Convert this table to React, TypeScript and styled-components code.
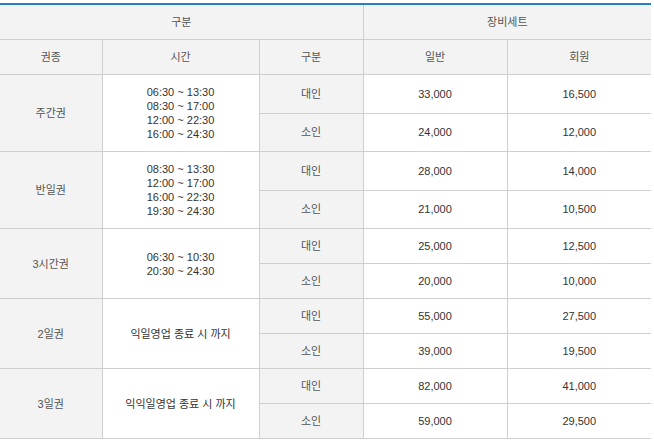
import React from "react";
import styled, { createGlobalStyle } from "styled-components";

// Types

type PriceRow = {
  who: string;
  normal: string;
  member: string;
};

type TicketGroup = {
  name: string;
  times: string[];
  rows: PriceRow[];
};

// Data

const groups: TicketGroup[] = [
  {
    name: "주간권",
    times: ["06:30 ~ 13:30", "08:30 ~ 17:00", "12:00 ~ 22:30", "16:00 ~ 24:30"],
    rows: [
      { who: "대인", normal: "33,000", member: "16,500" },
      { who: "소인", normal: "24,000", member: "12,000" },
    ],
  },
  {
    name: "반일권",
    times: ["08:30 ~ 13:30", "12:00 ~ 17:00", "16:00 ~ 22:30", "19:30 ~ 24:30"],
    rows: [
      { who: "대인", normal: "28,000", member: "14,000" },
      { who: "소인", normal: "21,000", member: "10,500" },
    ],
  },
  {
    name: "3시간권",
    times: ["06:30 ~ 10:30", "20:30 ~ 24:30"],
    rows: [
      { who: "대인", normal: "25,000", member: "12,500" },
      { who: "소인", normal: "20,000", member: "10,000" },
    ],
  },
  {
    name: "2일권",
    times: ["익일영업 종료 시 까지"],
    rows: [
      { who: "대인", normal: "55,000", member: "27,500" },
      { who: "소인", normal: "39,000", member: "19,500" },
    ],
  },
  {
    name: "3일권",
    times: ["익익일영업 종료 시 까지"],
    rows: [
      { who: "대인", normal: "82,000", member: "41,000" },
      { who: "소인", normal: "59,000", member: "29,500" },
    ],
  },
];

// Styled Components

const GlobalStyle = createGlobalStyle`
  body {
    margin: 0;
    background: #fff;
    font-family: "Liberation Sans", "Noto Sans CJK KR", sans-serif;
  }
`;

const Page = styled.div`
  padding-top: 3px;
  width: 651px;
`;

const Table = styled.table`
  width: 651px;
  border-collapse: collapse;
  table-layout: fixed;
  border-top: 2px solid #2382c6;
  font-size: 11px;
  line-height: 14px;
`;

const HeadCell = styled.th`
  padding: 10px 0;
  background: #f3f3f3;
  color: #555;
  font-weight: normal;
  text-align: center;
  border: 1px solid #cfcfcf;

  &:first-child {
    border-left: 0;
  }
  &:last-child {
    border-right: 0;
  }
`;

const Cell = styled.td<{ $shaded?: boolean; $tone?: "dark" | "grey" }>`
  padding: 10px 0;
  text-align: center;
  vertical-align: middle;
  background: ${({ $shaded }) => ($shaded ? "#f3f3f3" : "#fff")};
  color: ${({ $tone }) => ($tone === "grey" ? "#555" : "#333")};
  border: 1px solid #cfcfcf;

  &:first-child {
    border-left: 0;
  }
  &:last-child {
    border-right: 0;
  }
`;

const TimeLine = styled.div`
  line-height: 14px;
`;

// Functional Components

const App = () => {
  return (
    <Page>
      <GlobalStyle />
      <Table>
        <colgroup>
          <col style={{ width: 102 }} />
          <col style={{ width: 157 }} />
          <col style={{ width: 104 }} />
          <col style={{ width: 144 }} />
          <col style={{ width: 144 }} />
        </colgroup>
        <thead>
          <tr>
            <HeadCell colSpan={3}>구분</HeadCell>
            <HeadCell colSpan={2}>장비세트</HeadCell>
          </tr>
          <tr>
            <HeadCell>권종</HeadCell>
            <HeadCell>시간</HeadCell>
            <HeadCell>구분</HeadCell>
            <HeadCell>일반</HeadCell>
            <HeadCell>회원</HeadCell>
          </tr>
        </thead>
        <tbody>
          {groups.map((group) =>
            group.rows.map((row, i) => (
              <tr key={group.name + row.who}>
                {i === 0 && (
                  <>
                    <Cell rowSpan={group.rows.length} $shaded $tone="grey">
                      {group.name}
                    </Cell>
                    <Cell rowSpan={group.rows.length}>
                      {group.times.map((t) => (
                        <TimeLine key={t}>{t}</TimeLine>
                      ))}
                    </Cell>
                  </>
                )}
                <Cell $shaded $tone="grey">
                  {row.who}
                </Cell>
                <Cell>{row.normal}</Cell>
                <Cell>{row.member}</Cell>
              </tr>
            ))
          )}
        </tbody>
      </Table>
    </Page>
  );
};

export default App;
